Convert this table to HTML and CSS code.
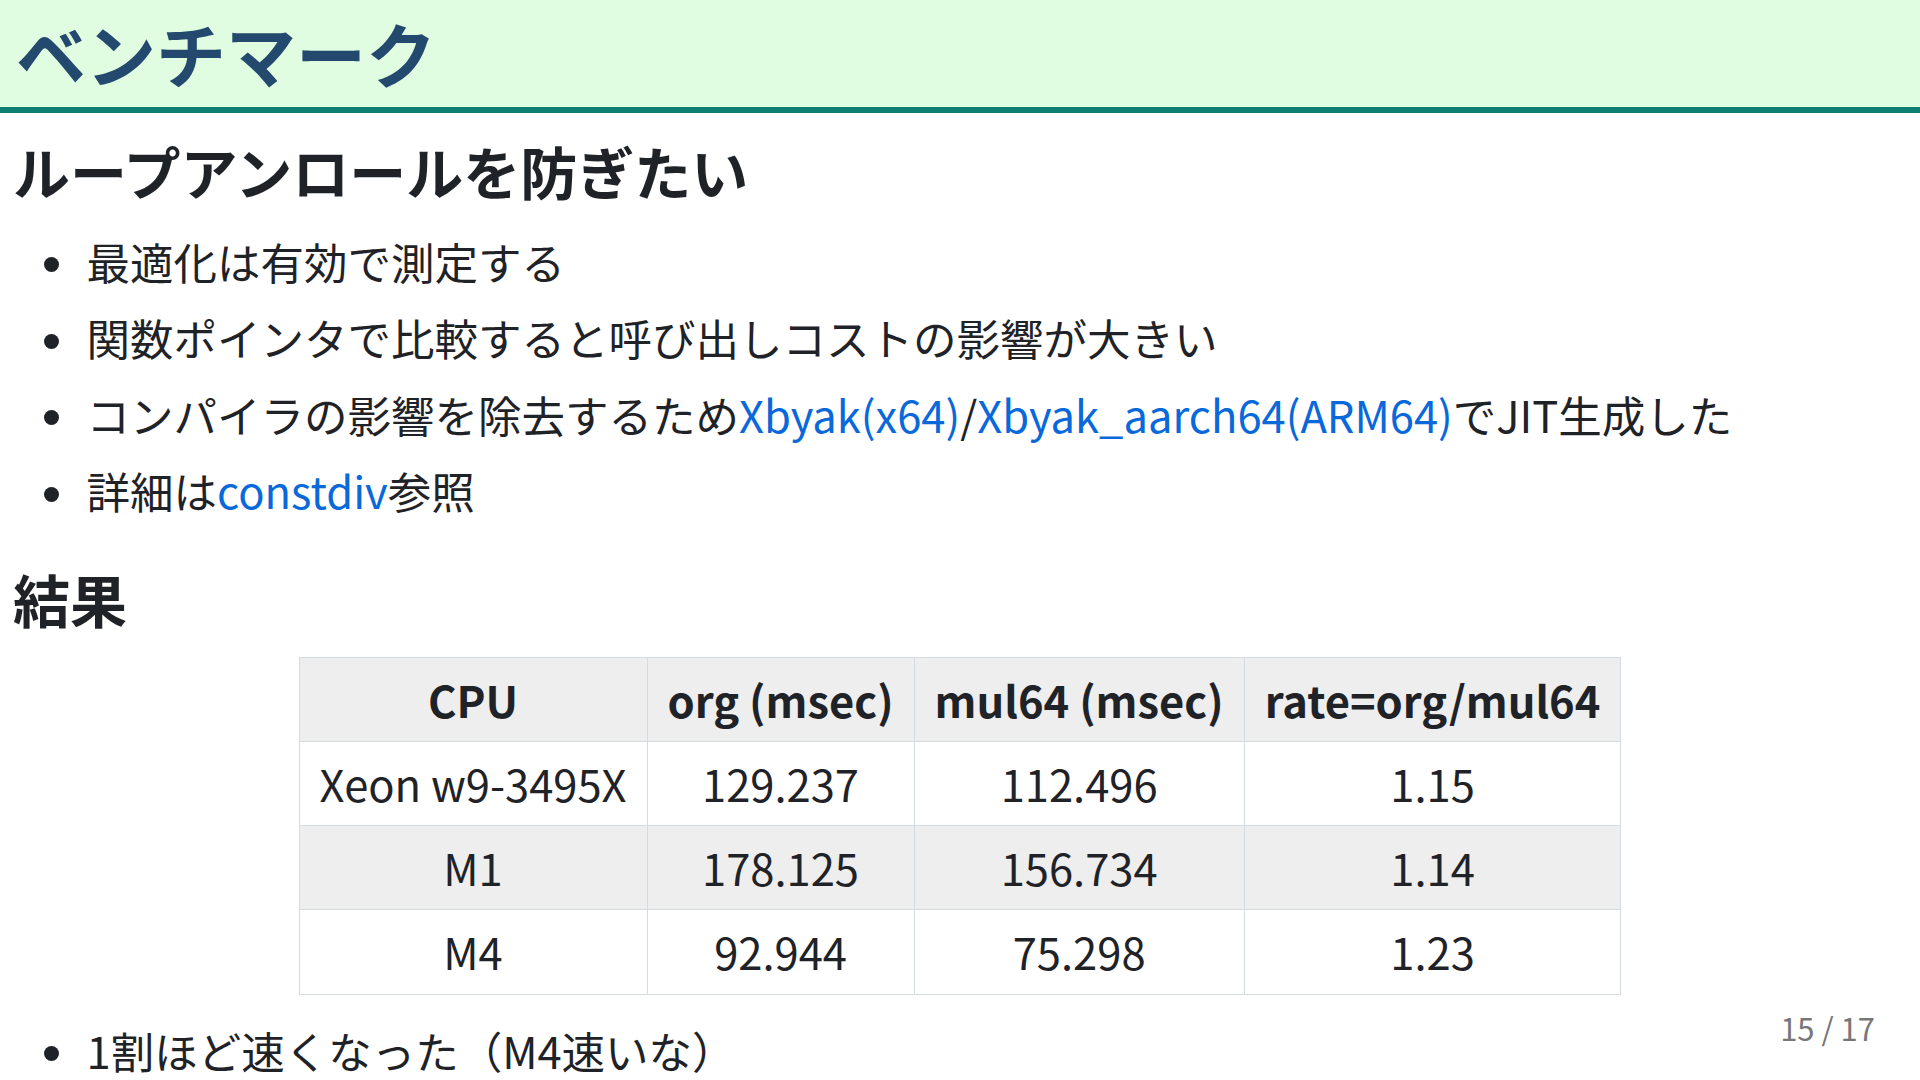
FILE: index.html
```html
<!DOCTYPE html>
<html lang="ja">
<head>
<meta charset="utf-8">
<title>ベンチマーク</title>
<link rel="stylesheet" href="styles.css">
</head>
<body>
<section class="slide">
  <header class="slide-header">
    <h1 class="slide-title">ベンチマーク</h1>
  </header>
  <div class="content">
    <h2 class="heading heading-first">ループアンロールを防ぎたい</h2>
    <ul class="bullets">
      <li>最適化は有効で測定する</li>
      <li>関数ポインタで比較すると呼び出しコストの影響が大きい</li>
      <li>コンパイラの影響を除去するため<a class="link" href="#">Xbyak(x64)</a>/<a class="link" href="#">Xbyak_aarch64(ARM64)</a>でJIT生成した</li>
      <li>詳細は<a class="link" href="#">constdiv</a>参照</li>
    </ul>
    <h2 class="heading heading-result">結果</h2>
    <div class="table-wrap">
      <table class="result-table">
        <thead>
          <tr><th>CPU</th><th>org (msec)</th><th>mul64 (msec)</th><th>rate=org/mul64</th></tr>
        </thead>
        <tbody>
          <tr><td>Xeon w9-3495X</td><td>129.237</td><td>112.496</td><td>1.15</td></tr>
          <tr><td>M1</td><td>178.125</td><td>156.734</td><td>1.14</td></tr>
          <tr><td>M4</td><td>92.944</td><td>75.298</td><td>1.23</td></tr>
        </tbody>
      </table>
    </div>
    <ul class="bullets bullets-last">
      <li>1割ほど速くなった（M4速いな）</li>
    </ul>
  </div>
  <div class="page-number">15 / 17</div>
</section>
</body>
</html>
```
FILE: styles.css
```css
html, body {
  margin: 0;
  padding: 0;
  background: #ffffff;
}

body {
  font-family: "Noto Sans CJK JP", "Noto Sans", sans-serif;
  color: #1f2328;
}

.slide {
  position: relative;
  width: 1920px;
  height: 1080px;
  overflow: hidden;
  background: #ffffff;
}

.slide-header {
  height: 107px;
  background: #e1fde1;
  border-bottom: 6px solid #0e7d72;
  display: flex;
  align-items: center;
  padding-left: 16px;
}

.slide-title {
  margin: 0;
  font-size: 70px;
  font-weight: 700;
  line-height: 1;
  color: #234a6e;
  padding-bottom: 2px;
}

.content {
  padding-left: 13px;
}

.heading {
  margin: 0;
  font-size: 57px;
  font-weight: 700;
  line-height: 70px;
  color: #1f2328;
}

.heading-first {
  margin-top: 22px;
}

.heading-result {
  margin-top: 39px;
}

.bullets {
  list-style: none;
  margin: 23.5px 0 0 0;
  padding: 0 0 0 31px;
}

.bullets li {
  font-size: 43.5px;
  line-height: 66px;
  white-space: nowrap;
}

.bullets li + li {
  margin-top: 10.5px;
}

.bullets li::before {
  content: "";
  display: inline-block;
  width: 15px;
  height: 15px;
  border-radius: 50%;
  background: #1f2328;
  margin-right: 27.5px;
  vertical-align: middle;
  position: relative;
  top: -3px;
}

.link {
  color: #0969da;
  text-decoration: none;
}

.table-wrap {
  display: flex;
  justify-content: center;
  margin-top: 23.5px;
  margin-left: -13px;
}

.result-table {
  border-collapse: collapse;
  font-size: 43.5px;
  line-height: 1.5;
}

.result-table th,
.result-table td {
  border: 1px solid #d5dbe1;
  padding: 9px 20px;
  text-align: center;
  white-space: nowrap;
}

.result-table th {
  font-weight: 700;
  background: #eeeeee;
}

.result-table tbody tr {
  background: #ffffff;
}

.result-table tbody tr:nth-child(2) {
  background: #eeeeee;
}

.bullets-last {
  margin-top: 23px;
}

.page-number {
  position: absolute;
  right: 45px;
  top: 1008px;
  font-size: 31px;
  line-height: 40px;
  color: #777777;
}
```
